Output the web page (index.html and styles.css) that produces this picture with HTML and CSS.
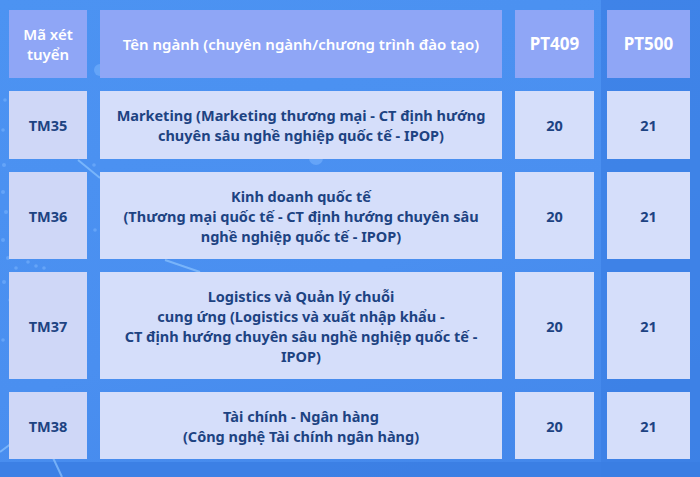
FILE: index.html
```html
<!DOCTYPE html>
<html lang="vi">
<head>
<meta charset="utf-8">
<link rel="stylesheet" href="styles.css">
</head>
<body>
<div class="page">
  <svg class="deco" width="700" height="477" viewBox="0 0 700 477">
    <rect x="601" y="0" width="99" height="477" fill="#3b7fe4" opacity="0.75"/>
    <rect x="0" y="462" width="700" height="15" fill="#3a7de2" opacity="0.8"/>
    <g fill="#7fb8ff" opacity="0.5">
      <circle cx="4" cy="165" r="2"/><circle cx="12" cy="178" r="1.8"/><circle cx="3" cy="192" r="2"/>
      <circle cx="18" cy="200" r="1.8"/><circle cx="6" cy="212" r="2"/><circle cx="14" cy="226" r="1.8"/>
      <circle cx="3" cy="240" r="2"/><circle cx="20" cy="246" r="1.8"/><circle cx="8" cy="258" r="2"/>
      <circle cx="16" cy="268" r="1.8"/><circle cx="4" cy="282" r="2"/><circle cx="22" cy="290" r="1.8"/>
      <circle cx="10" cy="300" r="1.8"/><circle cx="28" cy="262" r="1.8"/><circle cx="36" cy="266" r="1.8"/>
      <circle cx="44" cy="268" r="1.8"/><circle cx="94" cy="165" r="1.8"/><circle cx="95" cy="230" r="1.8"/>
      <circle cx="3" cy="340" r="1.8"/><circle cx="5" cy="100" r="1.8"/><circle cx="3" cy="130" r="1.8"/>
      <circle cx="100" cy="70" r="6"/><circle cx="316" cy="158" r="7"/>
    </g>
    <g stroke="#8cc4ff" stroke-width="2" opacity="0.7" fill="none">
      <line x1="0" y1="452" x2="32" y2="428"/>
      <line x1="40" y1="430" x2="62" y2="477"/>
      <line x1="78" y1="160" x2="100" y2="178"/>
      <line x1="165" y1="260" x2="200" y2="272"/>
    </g>
  </svg>
  <div class="table">
    <div class="cell head c1">Mã xét<br>tuyển</div>
    <div class="cell head c2 name">Tên ngành (chuyên ngành/chương trình đào tạo)</div>
    <div class="cell head c3 big">PT409</div>
    <div class="cell head c4 big">PT500</div>

    <div class="cell body code">TM35</div>
    <div class="cell body">Marketing (Marketing thương mại - CT định hướng<br>chuyên sâu nghề nghiệp quốc tế - IPOP)</div>
    <div class="cell body">20</div>
    <div class="cell body">21</div>

    <div class="cell body code">TM36</div>
    <div class="cell body">Kinh doanh quốc tế<br>(Thương mại quốc tế - CT định hướng chuyên sâu<br>nghề nghiệp quốc tế - IPOP)</div>
    <div class="cell body">20</div>
    <div class="cell body">21</div>

    <div class="cell body code">TM37</div>
    <div class="cell body">Logistics và Quản lý chuỗi<br>cung ứng (Logistics và xuất nhập khẩu -<br>CT định hướng chuyên sâu nghề nghiệp quốc tế -<br>IPOP)</div>
    <div class="cell body">20</div>
    <div class="cell body">21</div>

    <div class="cell body code">TM38</div>
    <div class="cell body">Tài chính - Ngân hàng<br>(Công nghệ Tài chính ngân hàng)</div>
    <div class="cell body">20</div>
    <div class="cell body">21</div>
  </div>
</div>
</body>
</html>
```
FILE: styles.css
```css
* { box-sizing: border-box; }
html, body { margin: 0; padding: 0; }
body {
  width: 700px;
  height: 477px;
  overflow: hidden;
  font-family: "Noto Sans", "Open Sans", sans-serif;
}
.page {
  position: relative;
  width: 700px;
  height: 477px;
  background: linear-gradient(160deg, #4c93f2 0%, #4a8ff0 55%, #4286ea 100%);
  padding: 10px 0 0 9px;
}
.deco {
  position: absolute;
  left: 0;
  top: 0;
  pointer-events: none;
}
.table {
  position: relative;
  display: grid;
  grid-template-columns: 78px 402px 79px 83px;
  grid-template-rows: 68px 68px 87px 107px 67px;
  column-gap: 13px;
  row-gap: 13px;
}
.cell {
  display: flex;
  align-items: center;
  justify-content: center;
  text-align: center;
  white-space: nowrap;
  font-weight: 700;
}
.head {
  background: #8fa6f6;
  color: #ffffff;
  font-size: 15px;
  line-height: 20px;
  font-weight: 600;
}
.head.name { font-size: 15px; font-weight: 600; }
.head.big { font-size: 17px; font-weight: 700; }
.body {
  background: #d5defa;
  color: #1d4382;
  font-size: 14.5px;
  line-height: 20px;
}
.body.code { background: #cfd7f7; }
```
